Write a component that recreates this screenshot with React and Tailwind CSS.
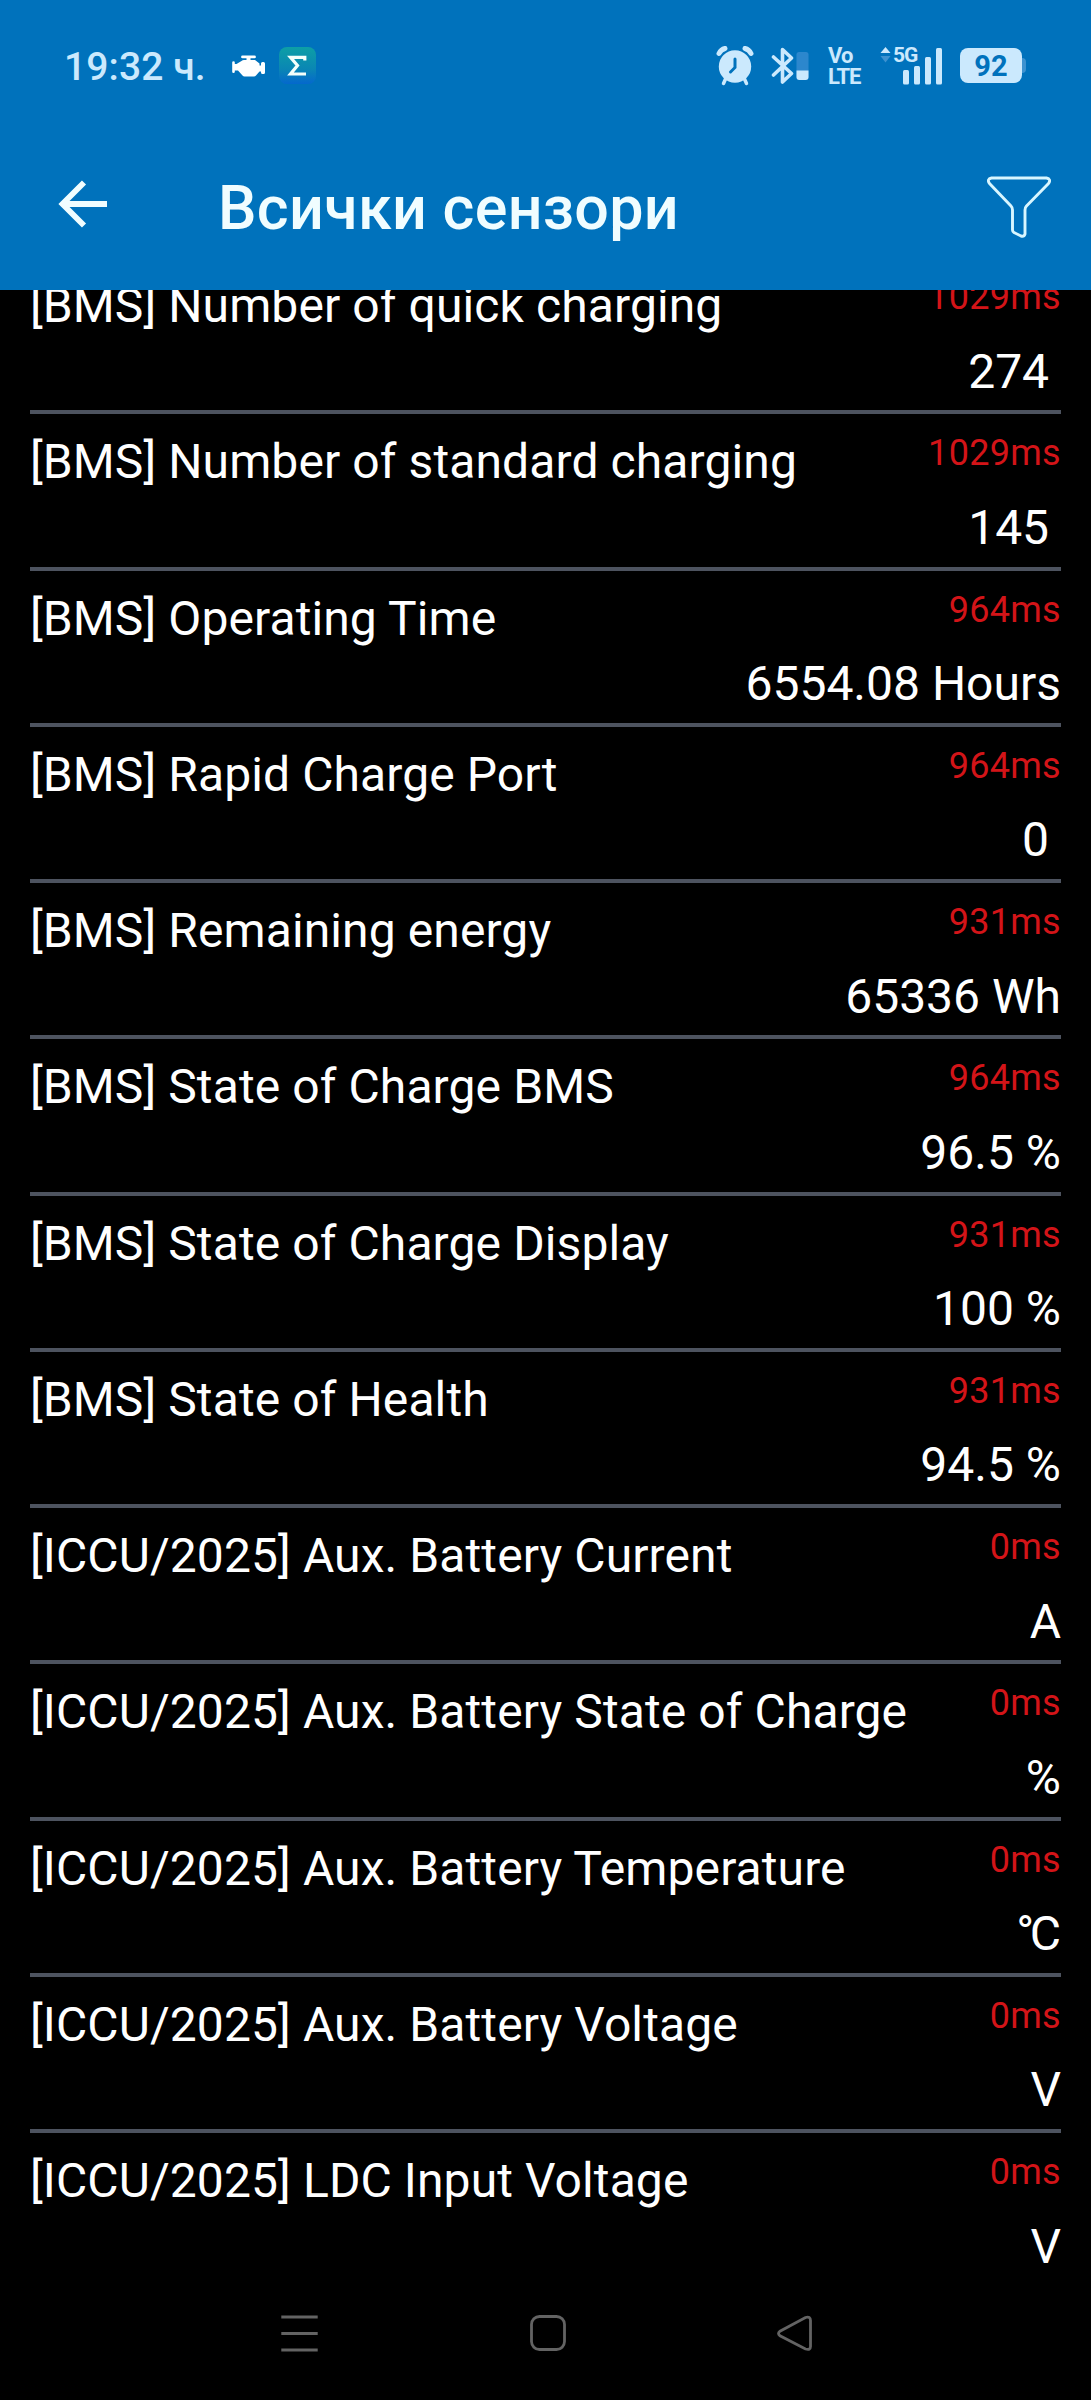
import React from 'react';

const sensors = [
  { name: '[BMS] Number of quick charging', time: '1029ms', value: '274', unit: '' },
  { name: '[BMS] Number of standard charging', time: '1029ms', value: '145', unit: '' },
  { name: '[BMS] Operating Time', time: '964ms', value: '6554.08', unit: 'Hours' },
  { name: '[BMS] Rapid Charge Port', time: '964ms', value: '0', unit: '' },
  { name: '[BMS] Remaining energy', time: '931ms', value: '65336', unit: 'Wh' },
  { name: '[BMS] State of Charge BMS', time: '964ms', value: '96.5', unit: '%' },
  { name: '[BMS] State of Charge Display', time: '931ms', value: '100', unit: '%' },
  { name: '[BMS] State of Health', time: '931ms', value: '94.5', unit: '%' },
  { name: '[ICCU/2025] Aux. Battery Current', time: '0ms', value: '', unit: 'A' },
  { name: '[ICCU/2025] Aux. Battery State of Charge', time: '0ms', value: '', unit: '%' },
  {
    name: '[ICCU/2025] Aux. Battery Temperature',
    time: '0ms',
    value: '',
    unit: <><span className="tracking-[-4.500px]">°</span>C</>,
  },
  { name: '[ICCU/2025] Aux. Battery Voltage', time: '0ms', value: '', unit: 'V' },
  { name: '[ICCU/2025] LDC Input Voltage', time: '0ms', value: '', unit: 'V' },
];

const EngineIcon = () => (
  <svg width="34" height="22" viewBox="0 0 34 22" fill="white" className="block">
    <path d="M10.500 0.500h12a1.200 1.200 0 0 1 0 2.800H18.500v1.700h4.500l4.500 3.500v2H29V8.500q0-1.500 1.500-1.500h1q1.500 0 1.500 1.500v9q0 1.500-1.500 1.500h-1q-1.500 0-1.500-1.500v-1h-1.500L24 20.500q-0.800 1-2 1H12.500q-1.200 0-2-1L6 15.500H2.800v1.300a1.300 1.300 0 0 1-2.600 0V7.500a1.300 1.300 0 0 1 2.600 0V9h1.700L9.500 6q1-1 2.500-1h2.500V3.300h-4a1.200 1.200 0 0 1 0-2.800z" />
  </svg>
);

const SigmaIcon = () => (
  <svg width="37" height="37" viewBox="0 0 37 37" className="block">
    <defs>
      <linearGradient id="sigma" x1="0" y1="0" x2="0" y2="1">
        <stop offset="0" stopColor="#0d9fa6" />
        <stop offset="0.600" stopColor="#0a86b4" />
        <stop offset="1" stopColor="#0468cd" />
      </linearGradient>
    </defs>
    <rect width="37" height="37" rx="8" fill="url(#sigma)" />
    <path d="M25.800 13.500V10.300H11.500L18.500 18.500L11.500 27H27" fill="none" stroke="#f4fffb" strokeWidth="3.200" />
  </svg>
);

const AlarmIcon = () => (
  <svg width="38" height="40" viewBox="0 0 38 40" className="block">
    <g fill="none" stroke="#cbe9fd" strokeLinecap="round">
      <path d="M3 7.500Q5 3.500 9 2.500M35 7.500Q33 3.500 29 2.500" strokeWidth="5" />
      <path d="M9.500 33L7.500 37.500M28.500 33L30.500 37.500" strokeWidth="3.500" />
    </g>
    <circle cx="19" cy="20.500" r="16.200" fill="#cbe9fd" />
    <path d="M19 13V21.500L14.500 26" fill="none" stroke="#0072bc" strokeWidth="3" strokeLinecap="round" />
  </svg>
);

const BluetoothIcon = () => (
  <svg width="38" height="40" viewBox="0 0 38 40" className="block">
    <path
      d="M2.500 11L20.500 27.500L11.500 36V3.500L20.500 12L2.500 29"
      fill="none"
      stroke="#cbe9fd"
      strokeWidth="3.600"
      strokeLinejoin="round"
      strokeLinecap="round"
    />
    <rect x="25.500" y="6" width="12" height="28" rx="2.500" fill="#2c87cd" />
    <path d="M25.500 24.500h12V31a3 3 0 0 1-3 3h-6a3 3 0 0 1-3-3z" fill="#cbe9fd" />
  </svg>
);

const SignalIcon = () => (
  <div className="relative h-[40px] w-[62px]">
    <svg width="62" height="40" viewBox="0 0 62 40" className="block">
      <path d="M5.500 1L10.500 7H0.500z" fill="#cbe9fd" />
      <path d="M5.500 16.500L10.500 10H0.500z" fill="#3d92d0" />
      <g fill="#cbe9fd">
        <rect x="23" y="24" width="6" height="14.500" rx="1.500" />
        <rect x="34" y="20" width="6" height="18.500" rx="1.500" />
        <rect x="45" y="11" width="6" height="27.500" rx="1.500" />
        <rect x="56" y="2" width="6" height="36.500" rx="1.500" />
      </g>
    </svg>
    <span className="absolute left-[13px] top-[-1px] text-[21px] leading-[21px] font-bold tracking-[-1px]">5G</span>
  </div>
);

const StatusBar = () => (
  <div className="flex h-[131px] items-center justify-between pl-[64px] pr-[65px] text-[#cbe9fd]">
    <div className="flex items-center">
      <span className="mt-[2px] w-[168px] text-[39px] leading-[46px] font-medium tracking-[0.100px]">19:32 ч.</span>
      <EngineIcon />
      <span className="ml-[13px]"><SigmaIcon /></span>
    </div>
    <div className="flex items-center">
      <AlarmIcon />
      <span className="ml-[17px]"><BluetoothIcon /></span>
      <div className="ml-[19px] flex w-[33px] flex-col text-[22px] leading-[21px] font-bold tracking-[-1px]">
        <span>Vo</span>
        <span>LTE</span>
      </div>
      <span className="ml-[19px]"><SignalIcon /></span>
      <div className="ml-[18px] flex items-center">
        <div className="flex h-[35px] w-[62px] items-center justify-center rounded-[8px] bg-[#cbe9fd] pt-[2px] text-[29px] leading-[33px] font-bold text-[#0072bc]">
          92
        </div>
        <div className="h-[15px] w-[4px] rounded-r-[4px] bg-[#3d92d0]" />
      </div>
    </div>
  </div>
);

const TitleBar = () => (
  <div className="flex h-[159px] items-center pl-[57px] pr-[40px]">
    <svg width="51" height="50" viewBox="0 0 51 50" className="mb-[13px] block" fill="none" stroke="#f0fdff" strokeWidth="5.800">
      <path d="M27 3.500L5.500 25L27 46.500M5.500 25H50" />
    </svg>
    <h1 className="mb-[5px] ml-[110px] text-[61px] leading-[68px] font-medium tracking-[0.300px] text-[#f0fdff]">Всички сензори</h1>
    <svg
      width="64"
      height="62"
      viewBox="0 0 64 62"
      className="mb-[7px] ml-auto block"
      fill="none"
      stroke="#d8f6ff"
      strokeWidth="2.900"
      strokeLinejoin="round"
    >
      <path d="M4.500 2H59.500Q64.500 3 61.500 7.500L39.500 30Q38 31.500 38 34V58Q37 61 34 60L27 56.500Q25.500 55.500 25.500 54V34Q25.500 31.500 24 30L2.500 7.500Q-0.500 3 4.500 2Z" />
    </svg>
  </div>
);

const SensorRow = ({ name, time, value, unit, last }) => (
  <div className="flex h-[156.270px] flex-col pt-[18px]">
    <div className="flex items-start justify-between">
      <span className="mt-[2px] text-[48px] leading-[56px] tracking-[0.100px] whitespace-pre text-white">{name}</span>
      <span className="text-[36px] leading-[42px] tracking-[0.300px] text-[#d31418]">{time}</span>
    </div>
    <span className="mt-[9.500px] text-right text-[48px] leading-[56px] whitespace-pre text-white">{value} {unit}</span>
    {!last && <div className="mt-auto h-[4px] shrink-0 bg-[#4d535f]" />}
  </div>
);

const NavBar = () => (
  <svg width="540" height="40" viewBox="0 0 540 40" className="block" fill="none" stroke="#636363" strokeWidth="2.800">
    <path d="M1.300 3H37.700M1.300 19.500H37.700M1.300 36H37.700" />
    <rect x="251.500" y="2.500" width="33" height="33" rx="8" />
    <path d="M525.500 3.500Q530.500 2 530.500 6.500V32.500Q530.500 36.500 525.500 35L500 21.800Q497 19.500 500 17.200Z" />
  </svg>
);

const App = () => (
  <div className="flex h-[2400px] w-[1091px] flex-col overflow-hidden bg-black font-['Roboto',sans-serif]">
    <header className="h-[290px] shrink-0 bg-[#0072bc]">
      <StatusBar />
      <TitleBar />
    </header>
    <main className="h-[1998px] shrink-0 overflow-hidden px-[30px]">
      <div className="-mt-[32px]">
        {sensors.map((sensor, index) => (
          <SensorRow key={sensor.name} {...sensor} last={index === sensors.length - 1} />
        ))}
      </div>
    </main>
    <nav className="flex flex-1 pl-[280px] pt-[26px]">
      <NavBar />
    </nav>
  </div>
);

export default App;
